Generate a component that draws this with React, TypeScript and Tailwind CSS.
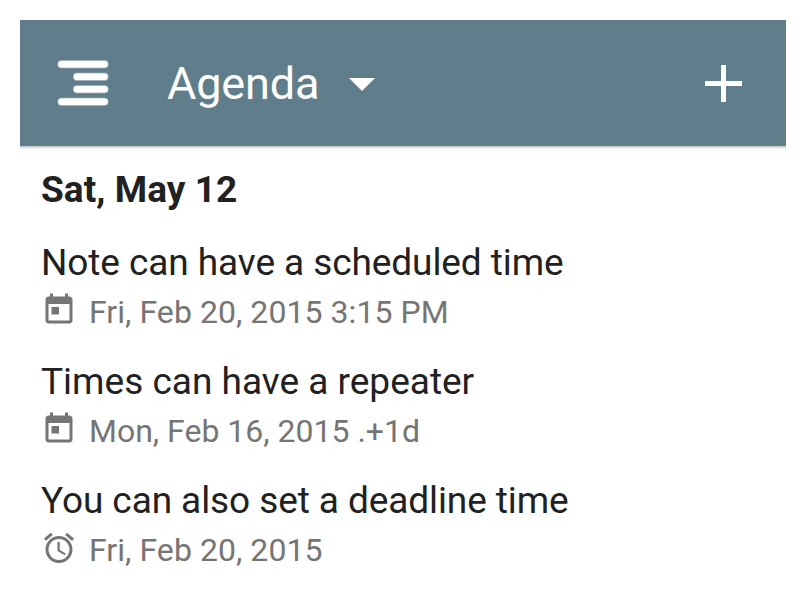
import React from 'react';

function CalendarIcon() {
  return (
    <svg viewBox="0 0 24 24" className="mb-[4px] block size-9" fill="#757575">
      <path d="M19 3h-1V1h-2v2H8V1H6v2H5c-1.11 0-1.99.9-1.99 2L3 19c0 1.1.89 2 2 2h14c1.1 0 2-.9 2-2V5c0-1.1-.9-2-2-2zm0 16H5V8h14v11zM7 10h5v5H7z" />
    </svg>
  );
}

function AlarmIcon() {
  return (
    <svg viewBox="0 0 24 24" className="mb-[4px] block size-9" fill="#757575">
      <path d="M22 5.72l-4.6-3.86-1.29 1.53 4.6 3.86L22 5.72zM7.88 3.39L6.6 1.86 2 5.71l1.29 1.53 4.59-3.85zM12.5 8H11v6l4.75 2.85.75-1.23-4-2.37V8zM12 4c-4.97 0-9 4.03-9 9s4.02 9 9 9c4.97 0 9-4.03 9-9s-4.03-9-9-9zm0 16c-3.87 0-7-3.13-7-7s3.13-7 7-7 7 3.13 7 7-3.13 7-7 7z" />
    </svg>
  );
}

const notes = [
  { title: 'Note can have a scheduled time', time: 'Fri, Feb 20, 2015 3:15 PM', icon: <CalendarIcon />, titleStyle: 'tracking-[-0.085px]', timeStyle: 'tracking-[0.06px]' },
  { title: 'Times can have a repeater', time: 'Mon, Feb 16, 2015 .+1d', icon: <CalendarIcon />, titleStyle: 'tracking-normal', timeStyle: 'tracking-normal' },
  { title: 'You can also set a deadline time', time: 'Fri, Feb 20, 2015', icon: <AlarmIcon />, titleStyle: 'tracking-[-0.09px]', timeStyle: 'tracking-[0.06px]' },
];

export default function App() {
  return (
    <div className="h-[614px] w-[806px] overflow-hidden bg-white p-5 font-['Roboto',sans-serif]">
      <header className="flex h-[126px] items-center bg-[#607d8b] pl-[37px] pr-[44px] text-white shadow-[0_1px_0_#c9c9c9,0_2px_0_#dedede,0_3px_0_#f3f3f3]">
        <svg viewBox="0 0 52 46" className="h-[46px] w-[52px]" strokeLinecap="round">
          <path stroke="#b7c5cc" strokeWidth="8" d="M4.5 4.200H47.500M20 16.700H47.500M20 29.300H47.500M4.500 41.800H47.500" />
          <path stroke="white" strokeWidth="6.4" d="M4.500 4.200H47.500M20 16.700H47.500M20 29.300H47.500M4.500 41.800H47.500" />
        </svg>
        <h1 className="ml-[58px] pt-[2px] text-[45px] leading-[54px] tracking-[-0.15px]">Agenda</h1>
        <svg viewBox="0 0 26 13" className="ml-[30px] mt-[2px] h-[13px] w-[26px]" fill="white"><path d="M0 0h26L13 13z" /></svg>
        <svg viewBox="0 0 37 37" className="ml-auto mt-px size-[37px]" fill="white"><path d="M16 0h5v16h16v5H21v16h-5V21H0v-5h16z" /></svg>
      </header>
      <main className="pl-[21px] pt-[21px]">
        <h2 className="h-[73px] text-[37px] font-bold leading-[46px] tracking-[0.06px] text-[#212121]">Sat, May 12</h2>
        {notes.map((note) => (
          <article key={note.title} className="h-[119px]">
            <h3 className={`text-[37px] leading-[46px] text-[#212121] ${note.titleStyle}`}>{note.title}</h3>
            <div className="flex h-[52px] items-center text-[32px] text-[#757575]">
              {note.icon}
              <span className={`ml-3 ${note.timeStyle}`}>{note.time}</span>
            </div>
          </article>
        ))}
      </main>
    </div>
  );
}
